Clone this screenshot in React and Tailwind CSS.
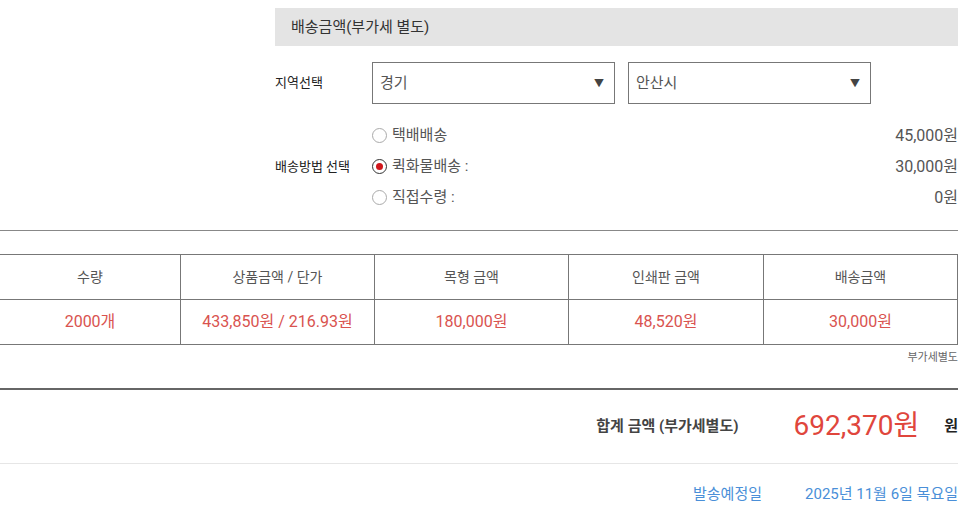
import React from "react";

const font = { fontFamily: 'Roboto, "Noto Sans CJK KR", "Noto Sans", sans-serif' };

const shipping = [
  { label: "택배배송", price: "45,000원", checked: false },
  { label: "퀵화물배송 :", price: "30,000원", checked: true },
  { label: "직접수령 :", price: "0원", checked: false },
];

const cols = [
  { head: "수량", value: "2000개", w: "w-[180px]" },
  { head: "상품금액 / 단가", value: "433,850원 / 216.93원", w: "w-[194px]" },
  { head: "목형 금액", value: "180,000원", w: "w-[194px]" },
  { head: "인쇄판 금액", value: "48,520원", w: "w-[195px]" },
  { head: "배송금액", value: "30,000원", w: "w-[195px]" },
];

const Select = ({ value }) => (
  <div className="w-[243px] h-[42px] border border-[#777] flex items-center justify-between px-[7px] text-[15px] text-[#555] bg-white">
    <span>{value}</span>
    <span className="text-[10px] text-[#444] mr-[3px]">▼</span>
  </div>
);

const Radio = ({ checked }) => (
  <span
    className={`w-[15px] h-[15px] rounded-full border flex items-center justify-center bg-white ${
      checked ? "border-[#333]" : "border-[#aaa]"
    }`}
  >
    {checked && <span className="w-[7px] h-[7px] rounded-full bg-[#d0161b]" />}
  </span>
);

export default function App() {
  return (
    <div className="w-[966px] h-[516px] bg-white overflow-hidden" style={font}>
      <div className="w-[958px]">
        {/* shipping section */}
        <div className="pl-[275px] pt-[8px]">
          <div className="h-[38px] bg-[#e4e4e4] flex items-center pl-[16px] text-[15px] text-[#333]">
            배송금액(부가세 별도)
          </div>
          <div className="flex items-center mt-[16px] h-[42px]">
            <div className="w-[97px] text-[13px] text-[#222]">지역선택</div>
            <div className="flex gap-[13px]">
              <Select value="경기" />
              <Select value="안산시" />
            </div>
          </div>
          <div className="flex items-center mt-[16px]">
            <div className="w-[97px] text-[13px] text-[#222]">배송방법 선택</div>
            <div className="flex-1 flex flex-col">
              {shipping.map((s) => (
                <div key={s.label} className="h-[31px] flex items-center justify-between text-[#555]">
                  <div className="flex items-center gap-[5px] text-[15px]">
                    <Radio checked={s.checked} />
                    <span>{s.label}</span>
                  </div>
                  <span className="text-[16px]">{s.price}</span>
                </div>
              ))}
            </div>
          </div>
        </div>

        <div className="mt-[17px] h-px bg-[#888]" />

        {/* summary table */}
        <div className="mt-[23px] flex border-y border-[#777]">
          {cols.map((c, i) => (
            <div key={c.head} className={`${c.w} flex flex-col ${i > 0 ? "border-l border-[#777]" : ""} ${i === cols.length - 1 ? "border-r border-[#777]" : ""}`}>
              <div className="h-[45px] flex items-center justify-center text-[14px] text-[#555] border-b border-[#777]">
                {c.head}
              </div>
              <div className="h-[44px] flex items-center justify-center text-[16px] text-[#d9534f]">
                {c.value}
              </div>
            </div>
          ))}
        </div>
        <div className="text-right text-[11px] text-[#666] mt-[5px]">부가세별도</div>

        <div className="mt-[21px] h-[2px] bg-[#666]" />

        {/* total */}
        <div className="h-[73px] flex items-center justify-end">
          <span className="text-[15px] font-bold text-[#444] mr-[55px]">합계 금액 (부가세별도)</span>
          <span className="text-[28px] text-[#e0463c] mr-[25px]">692,370원</span>
          <span className="text-[15px] font-bold text-[#222]">원</span>
        </div>
        <div className="h-px bg-[#e6e6e6]" />

        <div className="h-[62px] flex items-center justify-end text-[15px] text-[#4a8fd8]">
          <span className="mr-[43px]">발송예정일</span>
          <span>2025년 11월 6일 목요일</span>
        </div>
      </div>
    </div>
  );
}
